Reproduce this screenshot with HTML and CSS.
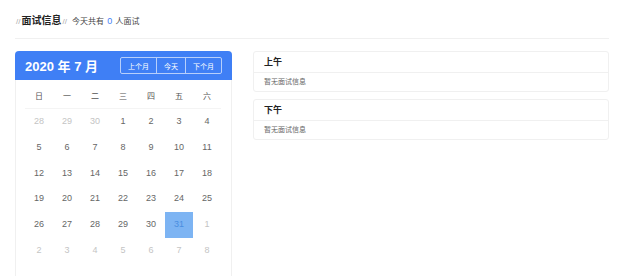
FILE: index.html
```html
<!DOCTYPE html>
<html lang="zh-CN">
<head>
    <meta charset="UTF-8">
    <title>面试信息</title>
    <link rel="stylesheet" href="styles.css">
</head>
<body>
    <div class="page">
        <div class="title-bar">
            <span class="slash">//</span>
            <span class="title">面试信息</span>
            <span class="slash">//</span>
            <span class="summary">今天共有 <span class="count">0</span> 人面试</span>
        </div>

        <div class="main">
            <div class="calendar">
                <div class="cal-header">
                    <span class="cal-month">2020 年 7 月</span>
                    <div class="cal-buttons">
                        <button>上个月</button>
                        <button>今天</button>
                        <button>下个月</button>
                    </div>
                </div>
                <div class="cal-body">
                    <div class="week">
                        <span>日</span><span>一</span><span>二</span><span>三</span><span>四</span><span>五</span><span>六</span>
                    </div>
                    <div class="days">
                        <span class="other">28</span><span class="other">29</span><span class="other">30</span><span>1</span><span>2</span><span>3</span><span>4</span>
                        <span>5</span><span>6</span><span>7</span><span>8</span><span>9</span><span>10</span><span>11</span>
                        <span>12</span><span>13</span><span>14</span><span>15</span><span>16</span><span>17</span><span>18</span>
                        <span>19</span><span>20</span><span>21</span><span>22</span><span>23</span><span>24</span><span>25</span>
                        <span>26</span><span>27</span><span>28</span><span>29</span><span>30</span><span class="selected">31</span><span class="other">1</span>
                        <span class="other">2</span><span class="other">3</span><span class="other">4</span><span class="other">5</span><span class="other">6</span><span class="other">7</span><span class="other">8</span>
                    </div>
                </div>
            </div>

            <div class="schedule">
                <div class="panel">
                    <div class="panel-head">上午</div>
                    <div class="panel-body">暂无面试信息</div>
                </div>
                <div class="panel">
                    <div class="panel-head">下午</div>
                    <div class="panel-body">暂无面试信息</div>
                </div>
            </div>
        </div>
    </div>
</body>
</html>
```

FILE: styles.css
```css
body {
    margin: 0;
    font-family: 'Liberation Sans', 'Noto Sans CJK SC', sans-serif;
    color: #333;
    background: #fff;
}

.page {
    padding: 13px 28px 0 15px;
}

.title-bar {
    display: flex;
    align-items: baseline;
    height: 25px;
    line-height: 16px;
    border-bottom: 1px solid #f0f0f0;
}

.slash {
    font-size: 8px;
    color: #aaa;
    margin: 0 1px;
}

.title {
    font-size: 10px;
    font-weight: bold;
    color: #222;
}

.summary {
    font-size: 8px;
    color: #444;
    margin-left: 4px;
}

.count {
    color: #3f7ff5;
    font-size: 9px;
    margin: 0 1px;
}

.main {
    display: flex;
    gap: 21px;
    margin-top: 12px;
}

.calendar {
    width: 217px;
    flex-shrink: 0;
    border: 1px solid #f0f0f0;
    border-top: none;
    border-bottom: none;
    border-radius: 4px 4px 0 0;
    box-sizing: border-box;
    height: 225px;
}

.cal-header {
    display: flex;
    align-items: center;
    justify-content: space-between;
    height: 29px;
    padding: 0 10px;
    margin: 0 -1px;
    background: #3f7ff5;
    border-radius: 4px 4px 0 0;
}

.cal-month {
    color: #fff;
    font-size: 13px;
    font-weight: bold;
}

.cal-buttons {
    display: flex;
    border: 1px solid #b7cffb;
    border-radius: 2px;
}

.cal-buttons button {
    background: transparent;
    border: none;
    border-left: 1px solid #b7cffb;
    color: #fff;
    font-family: 'Noto Sans CJK SC', sans-serif;
    font-size: 7px;
    height: 15px;
    padding: 0 7px;
    cursor: pointer;
}

.cal-buttons button:first-child {
    border-left: none;
}

.cal-body {
    padding: 6px 10px 0 9px;
}

.week,
.days {
    display: grid;
    grid-template-columns: repeat(7, 1fr);
    text-align: center;
}

.week {
    height: 22px;
    line-height: 22px;
    font-size: 8px;
    color: #555;
    border-bottom: 1px solid #f4f4f4;
}

.days span {
    height: 25.8px;
    line-height: 25.8px;
    font-size: 9px;
    color: #666;
}

.days .other {
    color: #c4c4c4;
}

.days .selected {
    background: #7db4f3;
    color: #4a8ee0;
}

.schedule {
    flex: 1;
    display: flex;
    flex-direction: column;
    gap: 7px;
}

.panel {
    border: 1px solid #f0f0f0;
    border-radius: 3px;
}

.panel-head {
    height: 20px;
    line-height: 20px;
    padding: 0 10px;
    font-size: 9px;
    font-weight: bold;
    color: #222;
    border-bottom: 1px solid #f0f0f0;
}

.panel-body {
    height: 18px;
    line-height: 18px;
    padding: 0 10px;
    font-size: 7px;
    color: #666;
}
```
